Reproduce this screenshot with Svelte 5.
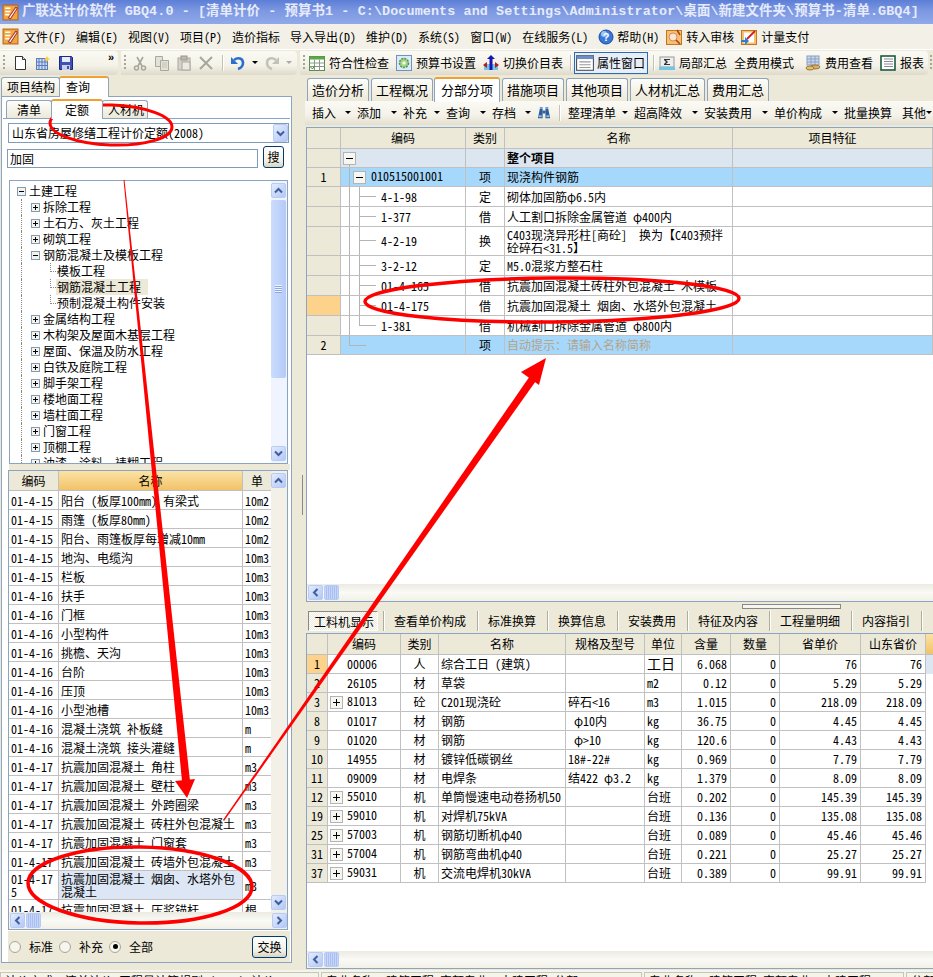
<script>
  const icons = {
    logo: '<rect x="1" y="1" width="14" height="14" fill="#f2a63c" stroke="#b5651d"/><path d="M3 4h5M3 7h5M3 10h4" stroke="#fff" stroke-width="1.5"/><path d="M6 13L13 3l1.5 1L8 14z" fill="#fff" stroke="#a33"/>',
    doc: '<path d="M3.5 1.5h7l3 3v10h-10z" fill="#fff" stroke="#333"/><path d="M10.5 1.5v3h3" fill="#dde" stroke="#333"/>',
    open: '<rect x="1.5" y="3.5" width="11" height="11" fill="#cfdcf6" stroke="#5b7bb8"/><path d="M4 3.5v11M7 3.5v11M10 3.5v11M1.5 7h11M1.5 10.5h11" stroke="#5b7bb8"/><path d="M12 1l1 2 2 1-2 1-1 2-1-2-2-1 2-1z" fill="#fc3"/>',
    save: '<path d="M1.5 1.5h12l1 1v12h-13z" fill="#3f51b5" stroke="#1c2a80"/><rect x="4" y="2" width="8" height="5" fill="#e8ecf8"/><rect x="4" y="10" width="8" height="5" fill="#c9cfe6"/><rect x="9" y="11" width="2" height="3" fill="#3f51b5"/>',
    cut: '<path d="M5 2l5 9M11 2L6 11" stroke="#a8a69c" stroke-width="1.6" fill="none"/><circle cx="4.5" cy="13" r="2" fill="none" stroke="#a8a69c" stroke-width="1.5"/><circle cx="11.5" cy="13" r="2" fill="none" stroke="#a8a69c" stroke-width="1.5"/>',
    copy: '<path d="M1.5 1.5h7v10h-7z" fill="#e4e2d8" stroke="#aaa89e"/><path d="M6.5 5.5h8v10h-8z" fill="#e4e2d8" stroke="#aaa89e"/><path d="M8 8h5M8 10h5M8 12h5" stroke="#c4c2b8"/>',
    paste: '<rect x="2" y="3" width="12" height="12" fill="#d6d4ca" stroke="#aaa89e"/><rect x="5" y="1" width="6" height="4" fill="#bdbbb0" stroke="#9a988e"/><rect x="6" y="7" width="8" height="8" fill="#eceae0" stroke="#aaa89e"/>',
    del: '<path d="M2 2l12 12M14 2L2 14" stroke="#a8a69c" stroke-width="2"/>',
    undo: '<path d="M4 5c4-3 9-2 9 3 0 3-2 5-5 6" fill="none" stroke="#2a6fd0" stroke-width="2.6"/><path d="M1 2v7h7z" fill="#2a6fd0"/>',
    redo: '<path d="M12 5C8 2 3 3 3 8c0 3 2 5 5 6" fill="none" stroke="#c4c2b8" stroke-width="2.6"/><path d="M15 2v7H8z" fill="#c4c2b8"/>',
    grid: '<rect x=".5" y="1.5" width="15" height="14" fill="#fff" stroke="#5a8a4a"/><rect x=".5" y="1.5" width="15" height="3" fill="#5aa84a"/><path d="M5.5 4.5v11M10.5 4.5v11M.5 8h15M.5 11.5h15" stroke="#8a9a8a"/><path d="M1.5 12l2 2 2-3" stroke="#2a9a2a" fill="none"/>',
    gear: '<rect x=".5" y=".5" width="15" height="15" fill="#dfeaf8" stroke="#6a94c4"/><circle cx="8" cy="8" r="4.5" fill="#a8d48a" stroke="#4a9a4a" stroke-dasharray="2 1" stroke-width="1.6"/><circle cx="8" cy="8" r="1.6" fill="#fff"/>',
    swap: '<rect x="1" y="9" width="14" height="6" fill="#6fc6e8"/><path d="M8 0l4 4H9.500v11h-3V4H4z" fill="#1616b8"/><path d="M0 10l4-3v6zM16 10l-4-3v6z" fill="#c01818"/>',
    win: '<rect x=".5" y="1.500" width="15" height="13" fill="#fff" stroke="#555"/><rect x=".5" y="1.500" width="15" height="3" fill="#6b8ec8"/><path d="M3 7h10M3 9.500h10M3 12h10" stroke="#999"/>',
    sum: '<rect x="1" y="2" width="14" height="10" fill="#eee" stroke="#999"/><path d="M5 4h6v1H7l2 2-2 2h4v1H5V9l2-2-2-2z" fill="#333"/><rect x="0" y="12" width="16" height="3" fill="#6fc6e8"/>',
    coin: '<rect x="2" y="1" width="12" height="9" fill="#c8d8f0" stroke="#8aa0c0"/><path d="M2 4h12M2 7h12M6 1v9M10 1v9" stroke="#8aa0c0"/><ellipse cx="10" cy="12" rx="5" ry="2" fill="#d8b060" stroke="#a07830"/><ellipse cx="5" cy="13" rx="4" ry="2" fill="#e0c070" stroke="#a07830"/>',
    book: '<rect x="1" y="1" width="14" height="14" fill="#fff" stroke="#1b5a3a" stroke-width="1.6"/><path d="M4 4h9M4 6.500h9M4 9h9M4 11.500h9" stroke="#889"/>',
    help: '<circle cx="8" cy="8" r="7" fill="#3a78d8" stroke="#1a4aa0"/><circle cx="6" cy="5" r="3" fill="#9cc4f4"/><text x="8" y="12" font-size="11" font-weight="700" text-anchor="middle" fill="#fff" font-family="Liberation Sans">?</text>',
    audit: '<rect x=".5" y="1.500" width="15" height="14" fill="#f6c070" stroke="#c07820"/><circle cx="7" cy="8" r="4" fill="#fbe6cf" stroke="#d88a60"/><path d="M10 11l4 4M11 1l3 5" stroke="#b04020" stroke-width="1.6"/>',
    pay: '<rect x=".5" y="1.500" width="15" height="14" fill="#f6c070" stroke="#c07820"/><rect x="3" y="3.500" width="10" height="10" fill="#fff"/><path d="M6 10L14 2" stroke="#d02020" stroke-width="1.8"/><path d="M0 11h4V8l4 4-4 4v-3H0z" fill="#2a7fd8"/>',
    binoc: '<path d="M1 14l2-10h3v10zM9 14V4h3l2 10z" fill="#2c5d9c"/><rect x="6" y="6" width="3" height="3" fill="#2c5d9c"/><path d="M3 2h3v2H3zM9 2h3v2H9z" fill="#6f95c4"/><rect x="2" y="11" width="3" height="2" fill="#9fc0e4"/><rect x="10" y="11" width="3" height="2" fill="#9fc0e4"/>'
  };

  const menus = ['文件(F)', '编辑(E)', '视图(V)', '项目(P)', '造价指标', '导入导出(D)', '维护(D)', '系统(S)', '窗口(W)', '在线服务(L)'];
  const rightTabs = ['造价分析', '工程概况', '分部分项', '措施项目', '其他项目', '人材机汇总', '费用汇总'];
  const subTools = [
    { t: '插入', w: 45 }, { t: '添加', w: 46 }, { t: '补充', w: 43 }, { t: '查询', w: 46 }, { t: '存档', w: 45 }
  ];
  const subTools2 = [
    { t: '整理清单', w: 66 }, { t: '超高降效', w: 70 }, { t: '安装费用', w: 70 }, { t: '单价构成', w: 70 }
  ];

  const tree = [
    { t: '土建工程', l: 0, box: 'minus' },
    { t: '拆除工程', l: 1, box: 'plus' },
    { t: '土石方、灰土工程', l: 1, box: 'plus' },
    { t: '砌筑工程', l: 1, box: 'plus' },
    { t: '钢筋混凝土及模板工程', l: 1, box: 'minus' },
    { t: '模板工程', l: 2 },
    { t: '钢筋混凝土工程', l: 2, sel: true },
    { t: '预制混凝土构件安装', l: 2, end: true },
    { t: '金属结构工程', l: 1, box: 'plus' },
    { t: '木构架及屋面木基层工程', l: 1, box: 'plus' },
    { t: '屋面、保温及防水工程', l: 1, box: 'plus' },
    { t: '白铁及庭院工程', l: 1, box: 'plus' },
    { t: '脚手架工程', l: 1, box: 'plus' },
    { t: '楼地面工程', l: 1, box: 'plus' },
    { t: '墙柱面工程', l: 1, box: 'plus' },
    { t: '门窗工程', l: 1, box: 'plus' },
    { t: '顶棚工程', l: 1, box: 'plus' },
    { t: '油漆、涂料、裱糊工程', l: 1, box: 'plus' }
  ];

  const quota = [
    ['01-4-15', '阳台 (板厚100mm) 有梁式', '10m2'],
    ['01-4-15', '雨篷 (板厚80mm)', '10m2'],
    ['01-4-15', '阳台、雨篷板厚每增减10mm', '10m2'],
    ['01-4-15', '地沟、电缆沟', '10m3'],
    ['01-4-15', '栏板', '10m3'],
    ['01-4-16', '扶手', '10m3'],
    ['01-4-16', '门框', '10m3'],
    ['01-4-16', '小型构件', '10m3'],
    ['01-4-16', '挑檐、天沟', '10m3'],
    ['01-4-16', '台阶', '10m3'],
    ['01-4-16', '压顶', '10m3'],
    ['01-4-16', '小型池槽', '10m3'],
    ['01-4-16', '混凝土浇筑 补板缝', 'm'],
    ['01-4-16', '混凝土浇筑 接头灌缝', 'm'],
    ['01-4-17', '抗震加固混凝土 角柱', 'm3'],
    ['01-4-17', '抗震加固混凝土 壁柱', 'm3'],
    ['01-4-17', '抗震加固混凝土 外跨圈梁', 'm3'],
    ['01-4-17', '抗震加固混凝土 砖柱外包混凝土', 'm3'],
    ['01-4-17', '抗震加固混凝土 门窗套', 'm3'],
    ['01-4-17', '抗震加固混凝土 砖墙外包混凝土', 'm3'],
    ['01-4-175', '抗震加固混凝土 烟囱、水塔外包混凝土', 'm3', true],
    ['01-4-17', '抗震加固混凝土 压浆锚杆', '根']
  ];

  const items = [
    { no: '', kind: 'all', h: 19, code: '', type: '', name: '整个项目' },
    { no: '1', kind: 'item', h: 19, code: '010515001001', type: '项', name: '现浇构件钢筋' },
    { no: '', kind: 'sub', h: 20, code: '4-1-98', type: '定', name: '砌体加固筋φ6.5内' },
    { no: '', kind: 'sub', h: 20, code: '1-377', type: '借', name: '人工割口拆除金属管道 φ400内' },
    { no: '', kind: 'sub', h: 29, code: '4-2-19', type: '换', name: 'C403现浇异形柱[商砼]  换为【C403预拌砼碎石<31.5】' },
    { no: '', kind: 'sub', h: 20, code: '3-2-12', type: '定', name: 'M5.0混浆方整石柱' },
    { no: '', kind: 'sub', h: 20, code: '01-4-165', type: '借', name: '抗震加固混凝土砖柱外包混凝土 木模板' },
    { no: '', kind: 'sub', h: 20, code: '01-4-175', type: '借', name: '抗震加固混凝土 烟囱、水塔外包混凝土', cur: true },
    { no: '', kind: 'sub last', h: 20, code: '1-381', type: '借', name: '机械割口拆除金属管道 φ800内' },
    { no: '2', kind: 'item end', h: 19, code: '', type: '项', name: '自动提示：请输入名称简称', hint: true }
  ];

  const lowerTabs = ['查看单价构成', '标准换算', '换算信息', '安装费用', '特征及内容', '工程量明细', '内容指引'];

  const mats = [
    ['1', false, '00006', '人', '综合工日 (建筑)', '', '工日', '6.068', '76', '76'],
    ['2', false, '26105', '材', '草袋', '', 'm2', '0.12', '5.29', '5.29'],
    ['3', true, '81013', '砼', 'C201现浇砼', '碎石<16', 'm3', '1.015', '218.09', '218.09'],
    ['8', false, '01017', '材', '钢筋', ' φ10内', 'kg', '36.75', '4.45', '4.45'],
    ['9', false, '01020', '材', '钢筋', ' φ>10', 'kg', '120.6', '4.43', '4.43'],
    ['10', false, '14955', '材', '镀锌低碳钢丝', '18#-22#', 'kg', '0.969', '7.79', '7.79'],
    ['11', false, '09009', '材', '电焊条', '结422 φ3.2', 'kg', '1.379', '8.09', '8.09'],
    ['12', true, '55010', '机', '单筒慢速电动卷扬机50', '', '台班', '0.202', '145.39', '145.39'],
    ['19', true, '59010', '机', '对焊机75kVA', '', '台班', '0.136', '135.08', '135.08'],
    ['25', true, '57003', '机', '钢筋切断机φ40', '', '台班', '0.089', '45.46', '45.46'],
    ['31', true, '57004', '机', '钢筋弯曲机φ40', '', '台班', '0.221', '25.27', '25.27'],
    ['37', true, '59031', '机', '交流电焊机30kVA', '', '台班', '0.389', '99.91', '99.91']
  ];
</script>

{#snippet ico(name, size = 16)}
  <svg class="ico" width={size} height={size} viewBox="0 0 16 16">{@html icons[name]}</svg>
{/snippet}

{#snippet box(kind)}
  <svg class="box" width="9" height="9" viewBox="0 0 9 9">
    <rect x=".5" y=".5" width="8" height="8" fill="#f4f2ea" stroke="#7f9db9" />
    <path d={kind === 'plus' ? 'M2 4.500h5M4.500 2v5' : 'M2 4.500h5'} stroke="#000" />
  </svg>
{/snippet}

{#snippet bigbox(kind)}
  <svg class="bigbox" width="13" height="13" viewBox="0 0 13 13">
    <rect x=".5" y=".5" width="12" height="12" fill="#f6f6f2" stroke="#b4b4b0" />
    <path d={kind === 'plus' ? 'M3 6.500h7M6.500 3v7' : 'M3 6.500h7'} stroke="#000" />
  </svg>
{/snippet}

{#snippet sbtn(dir)}
  <div class="sb-btn">
    <svg width="9" height="9" viewBox="0 0 9 9">
      {#if dir === 'up'}
        <path d="M1 6.500L4.500 3 8 6.500" fill="none" stroke="#3e5f9e" stroke-width="2" />
      {:else if dir === 'down'}
        <path d="M1 2.500L4.500 6 8 2.500" fill="none" stroke="#3e5f9e" stroke-width="2" />
      {:else if dir === 'left'}
        <path d="M6.500 1L3 4.500 6.500 8" fill="none" stroke="#3e5f9e" stroke-width="2" />
      {:else}
        <path d="M2.500 1L6 4.500 2.500 8" fill="none" stroke="#3e5f9e" stroke-width="2" />
      {/if}
    </svg>
  </div>
{/snippet}

{#snippet hscroll(arrowRight)}
  <div class="hscroll">
    {@render sbtn('left')}
    <div class="hthumb"></div>
    <div class="grow"></div>
    {#if arrowRight}{@render sbtn('right')}{/if}
  </div>
{/snippet}

<div class="app">
  <div class="title">{@render ico('logo', 17)}<span>广联达计价软件 GBQ4.0 - [清单计价 - 预算书1 - C:\Documents and Settings\Administrator\桌面\新建文件夹\预算书-清单.GBQ4]</span></div>

  <div class="menu">
    {@render ico('logo', 17)}
    {#each menus as m}<span class="menu-item">{m}</span>{/each}
    <span class="menu-item icon">{@render ico('help', 16)}帮助(H)</span>
    <span class="menu-item icon tight">{@render ico('audit', 16)}转入审核</span>
    <span class="menu-item icon tight">{@render ico('pay', 16)}计量支付</span>
  </div>

  <div class="toolbar">
    <div class="seg seg1">
      <i class="grip"></i>
      {@render ico('doc')}{@render ico('open')}{@render ico('save')}
      <span class="more">»</span>
    </div>
    <div class="seg seg2">
      <i class="grip"></i>
      {@render ico('cut')}{@render ico('copy')}{@render ico('paste')}{@render ico('del')}
      <i class="sep"></i>
      {@render ico('undo')}<i class="caret"></i>{@render ico('redo')}<i class="caret off"></i>
    </div>
    <div class="seg seg3">
      <i class="grip"></i>
      <span class="tb">{@render ico('grid')}符合性检查</span>
      <span class="tb">{@render ico('gear')}预算书设置</span>
      <span class="tb">{@render ico('swap')}切换价目表</span>
      <i class="sep"></i>
      <span class="tb active">{@render ico('win', 18)}属性窗口</span>
      <i class="sep"></i>
      <span class="tb">{@render ico('sum')}局部汇总</span>
      <span class="tb spaced">全费用模式</span>
      <span class="tb">{@render ico('coin')}费用查看</span>
      <span class="tb">{@render ico('book')}报表</span>
    </div>
    <i class="grip last"></i>
  </div>

  <div class="main">
    <div class="left">
      <div class="tabs lefttabs">
        <span class="tab">项目结构</span>
        <span class="tab on">查询</span>
      </div>
      <div class="panel">
        <div class="tabs subtabs">
          <span class="tab">清单</span>
          <span class="tab on">定额</span>
          <span class="tab">人材机</span>
        </div>
        <div class="query">
          <div class="select">
            <span class="grow">山东省房屋修缮工程计价定额(2008)</span>
            {@render sbtn('down')}
          </div>
          <div class="search">
            <div class="input">加固</div>
            <button class="btn">搜</button>
          </div>
          <div class="tree">
            <div class="tree-body">
              {#each tree as n}
                <div class="node l{n.l}" class:end={n.end}>
                  {#if n.box}{@render box(n.box)}{/if}
                  <span class="label" class:sel={n.sel}>{n.t}</span>
                </div>
              {/each}
            </div>
            <div class="vscroll">
              {@render sbtn('up')}
              <div class="vthumb tall"><b class="lines"></b></div>
              <div class="grow"></div>
              {@render sbtn('down')}
            </div>
          </div>
          <div class="divider"></div>
          <div class="list">
            <div class="list-top">
              <div class="list-rows">
                <table class="grid qt">
                  <thead>
                    <tr><th class="c1">编码</th><th class="c2 hot">名称</th><th class="c3">单</th></tr>
                  </thead>
                  <tbody>
                    {#each quota as q}
                      <tr class:picked={q[3]}>
                        <td class="c1">{q[0]}</td>
                        <td class="c2 nm">{q[1]}</td>
                        <td class="c3">{q[2]}</td>
                      </tr>
                    {/each}
                  </tbody>
                </table>
              </div>
              <div class="vscroll plain">
                {@render sbtn('up')}
                <div class="grow"></div>
                {@render sbtn('down')}
              </div>
            </div>
            {@render hscroll(true)}
          </div>
          <div class="filter">
            <i class="radio"></i><span>标准</span>
            <i class="radio"></i><span>补充</span>
            <i class="radio checked"></i><span>全部</span>
            <button class="btn wide">交换</button>
          </div>
        </div>
      </div>
    </div>

    <div class="splitter"><i></i></div>

    <div class="right">
      <div class="tabs righttabs">
        {#each rightTabs as t, i}<span class="tab" class:on={i === 2}>{t}</span>{/each}
      </div>
      <div class="subbar">
        {#each subTools as s}
          <span class="st" style="width:{s.w}px">{s.t}<i class="caret"></i></span>
        {/each}
        {@render ico('binoc', 15)}
        <i class="sep"></i>
        {#each subTools2 as s}
          <span class="st" style="width:{s.w}px">{s.t}<i class="caret"></i></span>
        {/each}
        <span class="st batch">批量换算</span>
        <span class="st other">其他<i class="caret"></i></span>
      </div>

      <div class="frame upper">
        <table class="grid it">
          <thead>
            <tr>
              <th class="i0"></th><th class="i1">编码</th><th class="i2">类别</th><th class="i3">名称</th><th class="i4">项目特征</th>
            </tr>
          </thead>
          <tbody>
            {#each items as r}
              <tr class={r.kind} class:cur={r.cur} style="height:{r.h}px">
                <td class="num">{r.no}</td>
                <td class="code">
                  {#if r.kind === 'all'}{@render bigbox('minus')}{/if}
                  {#if r.kind === 'item' && r.code}{@render bigbox('minus')}{/if}
                  {r.code}
                </td>
                <td class="mid">{r.type}</td>
                <td class="nm" class:hint={r.hint} class:bold={r.kind === 'all'}>{r.name}</td>
                <td></td>
              </tr>
            {/each}
          </tbody>
        </table>
        <div class="grow"></div>
        {@render hscroll(false)}
      </div>

      <div class="grab"><i></i></div>

      <div class="lowerbar">
        <span class="lt pressed">工料机显示</span>
        {#each lowerTabs as t}<i class="bar"></i><span class="lt">{t}</span>{/each}
        <i class="bar"></i>
      </div>

      <div class="frame lower">
        <table class="grid mt">
          <thead>
            <tr>
              <th class="m0"></th><th class="m1">编码</th><th class="m2">类别</th><th class="m3">名称</th>
              <th class="m4">规格及型号</th><th class="m5">单位</th><th class="m6">含量</th><th class="m7">数量</th>
              <th class="m8">省单价</th><th class="m9">山东省价</th><th class="m10 hot"></th>
            </tr>
          </thead>
          <tbody>
            {#each mats as r, i}
              <tr>
                <td class="num" class:now={i === 0}>{r[0]}</td>
                <td class="code">{#if r[1]}{@render bigbox('plus')}{/if}<span class="mcode">{r[2]}</span></td>
                <td class="mid">{r[3]}</td>
                <td class="nm">{r[4]}</td>
                <td class="nm">{r[5]}</td>
                <td class="nm" class:big={i === 0}>{r[6]}</td>
                <td class="rt">{r[7]}</td>
                <td class="rt">0</td>
                <td class="rt">{r[8]}</td>
                <td class="rt">{r[9]}</td>
                <td class:tint={i === 0} class="edge"></td>
              </tr>
            {/each}
          </tbody>
        </table>
        <div class="grow"></div>
        {@render hscroll(false)}
      </div>
    </div>
  </div>

  <div class="status">
    <span class="s1">计价方式：清单计价 工程量计算规则 (2008)-计价</span>
    <span class="s2">专业名称：建筑工程 定额专业：土建工程 分部</span>
    <span class="s3">专业名称：建筑工程 定额专业：土建工程</span>
    <span class="s4">分部</span>
  </div>

  <svg class="marks" width="933" height="977" viewBox="0 0 933 977">
    <ellipse cx="111" cy="125" rx="61" ry="20" transform="rotate(2 111 125)" fill="none" stroke="#f00" stroke-width="3" />
    <ellipse cx="552" cy="300" rx="187" ry="22" transform="rotate(-.5 552 300)" fill="none" stroke="#f00" stroke-width="3.500" />
    <ellipse cx="140" cy="885" rx="112" ry="38" transform="rotate(1 140 885)" fill="none" stroke="#f00" stroke-width="3.500" />
    <path d="M123.500 180h1L190 781h-8z" fill="#f00" />
    <path d="M175 781l20-2-8 19z" fill="#f00" />
    <path d="M223 820l1 1L538 378l-6-5z" fill="#f00" />
    <path d="M546 358l-25 14 18 13z" fill="#f00" />
  </svg>
</div>

<style>
  :global(body) { margin: 0; background: #ece9d8; }

  .app {
    position: relative;
    width: 933px;
    height: 977px;
    overflow: hidden;
    display: flex;
    flex-direction: column;
    background: #ece9d8;
    font: 12px/16px "Noto Sans CJK SC", "Liberation Sans", sans-serif;
    font-feature-settings: "hwid";
    color: #000;
  }

  .ico { flex: none; display: block; }
  .grow { flex: 1; }
  i { display: block; font-style: normal; }

  .title {
    height: 24px;
    flex: none;
    display: flex;
    align-items: center;
    gap: 3px;
    padding-left: 2px;
    background: linear-gradient(#5c7ed6, #7c98e2 45%, #90a9e9);
    color: #e6ebfb;
    font: bold 13.4px/24px "Liberation Mono", "Noto Sans CJK SC", monospace;
    font-feature-settings: normal;
    letter-spacing: .11px;
    white-space: pre;
  }

  .menu {
    height: 26px;
    flex: none;
    display: flex;
    align-items: center;
    padding-left: 2px;
    background: #f3f1e7;
    border-bottom: 1px solid #fff;
    box-sizing: border-box;
  }
  .menu-item { margin-left: 10px; white-space: pre; }
  .menu-item.icon { display: flex; align-items: center; gap: 3px; }
  .menu-item.tight { margin-left: 7px; gap: 4px; }
  .menu-item:first-of-type { margin-left: 5px; }

  .toolbar {
    height: 25px;
    flex: none;
    display: flex;
    align-items: center;
    gap: 3px;
    background: #ece9d8;
  }
  .seg {
    height: 24px;
    box-sizing: border-box;
    display: flex;
    align-items: center;
    background: linear-gradient(#faf9f4, #f4f2e8 60%, #dedacb);
    border-radius: 0 4px 4px 0;
  }
  .grip {
    width: 2px;
    height: 16px;
    margin: 0 4px 0 3px;
    background: repeating-linear-gradient(#a8a596 0 2px, transparent 2px 4px);
    flex: none;
  }
  .grip.last { margin: 0 0 0 -1px; }
  .seg1 { width: 118px; gap: 7px; position: relative; }
  .seg1 .grip { margin-right: 0; }
  .more { position: absolute; right: 4px; top: 0; font: bold 11px/12px "Liberation Sans", sans-serif; }
  .seg2 { width: 176px; gap: 6px; }
  .seg2 .grip { margin-right: 0; }
  .seg2 .sep { margin-left: 2px; }
  .sep { width: 1px; height: 16px; background: #c5c2b2; border-right: 1px solid #fff; flex: none; }
  .caret { width: 0; height: 0; border: 3px solid transparent; border-top: 3px solid #000; border-bottom: 0; flex: none; }
  .caret.off { border-top-color: #aaa; }
  .seg3 { width: 628px; }
  .tb { display: flex; align-items: center; gap: 4px; margin-right: 7px; white-space: nowrap; }
  .tb.spaced { margin-right: 11px; }
  .tb.active {
    height: 22px;
    padding: 0 2px 0 1px;
    margin: 0 5px 0 1px;
    background: #e8eef7;
    border: 1px solid #2a6bb8;
    box-sizing: border-box;
    gap: 3px;
  }
  .seg3 .sep { margin-right: 1px; }
  .tb.active + .sep { margin-right: 4px; }

  .main { flex: 1; min-height: 0; display: flex; }

  .tabs { display: flex; align-items: flex-end; }
  .tab {
    box-sizing: border-box;
    height: 19px;
    padding: 0 5px;
    border: 1px solid #91a3b8;
    border-bottom: 0;
    border-radius: 3px 3px 0 0;
    background: linear-gradient(#fdfdfa, #ece9d8);
    line-height: 17px;
    white-space: nowrap;
    position: relative;
  }
  .tab.on {
    height: 21px;
    background: #fff;
    border-color: #91a3b8;
    border-top: 2px solid #f0a030;
    z-index: 1;
    margin-bottom: -1px;
  }

  .left { width: 296px; flex: none; display: flex; flex-direction: column; padding: 1px 0 7px 1px; box-sizing: border-box; }
  .lefttabs { height: 20px; margin-right: 0; }
  .lefttabs .tab { width: 59px; text-align: center; }
  .lefttabs .tab.on { width: 50px; text-align: left; padding-left: 6px; margin-left: -1px; }

  .panel {
    width: 291px;
    height: 867px;
    box-sizing: border-box;
    background: #fff;
    border: 1px solid #8ba4c1;
    display: flex;
    flex-direction: column;
  }
  .subtabs { height: 21px; padding-left: 4px; }
  .subtabs .tab { width: 46px; text-align: center; height: 18px; }
  .subtabs .tab.on { width: 52px; height: 20px; margin-left: -1px; }
  .subtabs .tab:last-child { margin-left: -1px; }

  .query {
    flex: 1;
    margin: 0 1px 0 1px;
    border-top: 1px solid #8ba4c1;
    display: flex;
    flex-direction: column;
    min-height: 0;
  }
  .select {
    height: 20px;
    margin: 4px 1px 0 5px;
    border: 1px solid #7f9db9;
    display: flex;
    align-items: center;
    padding-left: 3px;
    box-sizing: border-box;
  }
  .select :global(.sb-btn) { width: 15px; height: 18px; }
  .search { display: flex; gap: 5px; margin: 3px 0 0 4px; height: 22px; align-items: flex-end; }
  .input {
    width: 251px;
    height: 19px;
    border: 1px solid #7f9db9;
    box-sizing: border-box;
    line-height: 17px;
    padding-left: 2px;
  }
  .btn {
    font: inherit;
    font-feature-settings: inherit;
    width: 21px;
    height: 22px;
    padding: 0;
    background: linear-gradient(#fff, #f2f0e4 70%, #d8d3c0);
    border: 1px solid #003c74;
    border-radius: 3px;
    color: #000;
  }
  .btn.wide { width: 35px; margin-left: auto; margin-right: 3px; }

  .tree {
    height: 284px;
    margin: 12px 2px 0 6px;
    flex: none;
    border: 1px solid #8ba4c1;
    box-sizing: border-box;
    display: flex;
  }
  .tree-body { flex: 1; padding-top: 2px; overflow: hidden; position: relative; }
  .node { height: 16px; position: relative; display: flex; align-items: center; white-space: nowrap; }
  .l0 { padding-left: 7px; }
  .l1 { padding-left: 21px; }
  .l2 { padding-left: 47px; }
  .box { margin-right: 3px; flex: none; background: #fff; position: relative; z-index: 1; }
  .l1::before, .l2::before {
    content: "";
    position: absolute;
    left: 11px;
    top: 0;
    bottom: 0;
    border-left: 1px dotted #888;
  }
  .l2::after {
    content: "";
    position: absolute;
    left: 40px;
    top: 0;
    width: 7px;
    height: 8px;
    border-left: 1px dotted #888;
    border-bottom: 1px dotted #888;
  }
  .l2 .label { padding: 0 1px; margin-left: -1px; }
  .label.sel { background: #ece9d8; height: 16px; padding-right: 7px; }
  .vscroll {
    width: 16px;
    flex: none;
    display: flex;
    flex-direction: column;
    background: #f0f4fe;
    padding: 2px 0;
    box-sizing: border-box;
  }
  .vscroll.plain { background: #f3f1e7; }
  :global(.sb-btn) {
    flex: none;
    width: 15px;
    height: 15px;
    background: linear-gradient(135deg, #e3ebfd, #b4c8f6);
    border: 1px solid #b8cbf4;
    border-radius: 2px;
    box-sizing: border-box;
    display: flex;
    align-items: center;
    justify-content: center;
  }
  .vthumb {
    height: 178px;
    margin-top: 2px;
    width: 15px;
    background: linear-gradient(90deg, #cbdcfc, #b5caf7);
    border-radius: 2px;
    display: flex;
    align-items: center;
    justify-content: center;
  }
  .lines { width: 7px; height: 8px; background: repeating-linear-gradient(#eef3fe 0 1px, #8fa9e0 1px 2px); }

  .divider { height: 6px; flex: none; background: #ece9d8; margin: 0 0 0 6px; }

  .list {
    height: 460px;
    flex: none;
    margin: 0 2px 0 5px;
    border: 1px solid #8ba4c1;
    box-sizing: border-box;
    display: flex;
    flex-direction: column;
  }
  .list-top { flex: 1; min-height: 0; display: flex; }
  .list-rows { flex: 1; overflow: hidden; }
  .grid { border-collapse: separate; border-spacing: 0; table-layout: fixed; background: #fff; }
  .grid th {
    font-weight: 400;
    background: #ece9d8;
    border-right: 1px solid #c0c0c0;
    border-bottom: 1px solid #c0c0c0;
    padding: 0;
    box-sizing: border-box;
    overflow: hidden;
  }
  .grid td {
    border-right: 1px solid #c0c0c0;
    border-bottom: 1px solid #c0c0c0;
    padding: 0 2px;
    box-sizing: border-box;
    overflow: hidden;
    line-height: 13px;
  }
  .grid th.hot { background: linear-gradient(#fbe3a5, #f2c268); }
  .qt { width: 262px; }
  .qt th { height: 20px; }
  .qt td { height: 19px; word-break: break-all; }
  .qt .c1 { width: 50px; }
  .qt .c2 { width: 184px; }
  .qt .c3 { width: 28px; border-right: 0; }
  .nm { white-space: pre-wrap; }
  .qt tr.picked .nm { background: #dce6f5; }
  .qt tr.picked td { height: 29px; }

  .hscroll {
    height: 17px;
    flex: none;
    display: flex;
    align-items: center;
    background: linear-gradient(#ecebe2, #fafaf6 50%, #f2f0e6);
    padding: 0 0 0 1px;
  }
  .hthumb { width: 15px; height: 15px; margin-left: 1px; border-radius: 2px; background: repeating-linear-gradient(90deg, #c6d6fa 0 1px, #a9bff0 1px 2px); border: 1px solid #b8cbf4; box-sizing: border-box; flex: none; }

  .filter {
    flex: 1;
    background: #ece9d8;
    margin: 1px 0 0 5px;
    display: flex;
    align-items: center;
    padding-left: 1px;
  }
  .filter span { margin: 0 6px 0 8px; }
  .radio {
    width: 10px;
    height: 10px;
    border: 1px solid #a8a698;
    border-radius: 50%;
    background: #f6f5ee;
    flex: none;
    position: relative;
  }
  .radio.checked::after {
    content: "";
    position: absolute;
    inset: 2.500px;
    border-radius: 50%;
    background: #000;
  }

  .splitter { width: 9px; flex: none; position: relative; }
  .splitter i { position: absolute; left: 6px; top: 400px; width: 1px; height: 40px; background: #8a8a80; }

  .right { flex: 1; min-width: 0; display: flex; flex-direction: column; padding-bottom: 1px; box-sizing: border-box; }
  .righttabs { height: 26px; margin-left: 2px; gap: 2px; }
  .righttabs .tab { font-size: 13px; padding: 0 4px; height: 23px; line-height: 21px; }
  .righttabs .tab.on { height: 25px; margin: 0 0 -1px -1px; padding: 0 6px; }

  .subbar {
    height: 24px;
    flex: none;
    display: flex;
    align-items: center;
    padding-left: 7px;
    background: linear-gradient(#faf9f4, #f4f2e8 60%, #e2decf);
    overflow: hidden;
  }
  .st { display: flex; align-items: center; flex: none; white-space: nowrap; }
  .st .caret { margin-left: auto; margin-right: 6px; }
  .subbar .sep { margin: 0 7px; }
  .st.batch { width: 58px; }
  .st.other { width: 32px; }

  .frame {
    border: 1px solid #8ba4c1;
    border-right: 0;
    margin-left: 1px;
    display: flex;
    flex-direction: column;
    box-sizing: border-box;
    overflow: hidden;
  }
  .upper { height: 476px; margin-top: 2px; background: #fff; }
  .it { width: 626px; flex: none; }
  .it th { height: 21px; }
  .it .i0 { width: 34px; }
  .it .i1 { width: 125px; }
  .it .i2 { width: 39px; }
  .it .i3 { width: 228px; }
  .it .i4 { width: 200px; }
  .it td.num { background: #ece9d8; text-align: center; }
  .it tr.cur td.num { background: #fdd38b; }
  .it td.code { padding-left: 1px; white-space: nowrap; }
  .it td.mid, .mt td.mid { text-align: center; }
  .it tr.all td { background: #dce6f1; }
  .it tr.all td.num { background: #ece9d8; }
  .it tr.item td { background: #a6d8fb; }
  .it tr.item td.num { background: #ece9d8; }
  .bold { font-weight: 700; }
  .hint { color: #b5a48c; }
  :global(.bigbox) { vertical-align: -3px; margin-right: -1px; }
  .it tr.all td.code { padding-left: 2px; background: linear-gradient(#b4b4b4, #b4b4b4) 8px 16px / 1px 5px no-repeat, #dce6f1; }
  .it tr.item td.code {
    padding-left: 12px;
    background: linear-gradient(#b4b4b4, #b4b4b4) 8px 0 / 1px 100% no-repeat, #a6d8fb;
  }
  .it tr.item.end td.code {
    background:
      linear-gradient(#b4b4b4, #b4b4b4) 8px 0 / 1px 50% no-repeat,
      linear-gradient(#b4b4b4, #b4b4b4) 8px 9px / 17px 1px no-repeat,
      #a6d8fb;
  }
  .it tr.sub td.code {
    padding-left: 40px;
    background:
      linear-gradient(#b4b4b4, #b4b4b4) 8px 0 / 1px 100% no-repeat,
      linear-gradient(#b4b4b4, #b4b4b4) 18px 0 / 1px 100% no-repeat,
      linear-gradient(#b4b4b4, #b4b4b4) 18px 50% / 17px 1px no-repeat,
      #fff;
  }
  .it tr.sub.last td.code {
    background:
      linear-gradient(#b4b4b4, #b4b4b4) 8px 0 / 1px 100% no-repeat,
      linear-gradient(#b4b4b4, #b4b4b4) 18px 0 / 1px 50% no-repeat,
      linear-gradient(#b4b4b4, #b4b4b4) 18px 50% / 17px 1px no-repeat,
      #fff;
  }

  .grab { height: 8px; flex: none; position: relative; background: #ece9d8; }
  .grab i { position: absolute; left: 437px; top: 2px; width: 99px; height: 5px; border: 1px solid #888; background: #f6f5ee; box-sizing: border-box; }

  .lowerbar { height: 22px; flex: none; display: flex; align-items: center; padding-left: 3px; background: #ece9d8; white-space: nowrap; }
  .lt { margin: 0 11px 0 9px; flex: none; }
  .lt.pressed {
    margin: 0 5px 0 0;
    padding: 0 3px 0 5px;
    height: 20px;
    line-height: 19px;
    border: 1px solid;
    border-color: #888 #fff #fff #888;
    box-sizing: border-box;
    background: repeating-conic-gradient(#fff 0 25%, #ece9d8 0 50%) 0 0 / 2px 2px;
  }
  .bar { width: 1px; height: 20px; background: #b0ad9e; border-right: 1px solid #fff; flex: none; }

  .lower { height: 337px; margin-top: 1px; background: #fff; }
  .mt { width: 626px; flex: none; }
  .mt th { height: 21px; }
  .mt td { height: 19px; }
  .mt .m0 { width: 21px; }
  .mt .m1 { width: 73px; }
  .mt .m2 { width: 38px; }
  .mt .m3 { width: 127px; }
  .mt .m4 { width: 79px; }
  .mt .m5 { width: 37px; }
  .mt .m6 { width: 49px; }
  .mt .m7 { width: 49px; }
  .mt .m8 { width: 81px; }
  .mt .m9 { width: 65px; }
  .mt .m10 { width: 7px; border-right: 0 !important; }
  .mt td.num { background: #ece9d8; text-align: center; padding: 0; }
  .mt td.num.now { background: #fdd38b; }
  .mt td.code { padding-left: 2px; white-space: nowrap; }
  .mt td.code .mcode:first-child { padding-left: 17px; }
  .mt td.code :global(.bigbox) { margin-right: 4px; }
  .mt td.rt { text-align: right; padding-right: 3px; }
  .mt td.nm { padding: 0 2px; white-space: pre; }
  .mt td.big { font-size: 14px; }
  .mt td.edge { border-right: 0; border-bottom: 0; padding: 0; }
  .mt td.tint { background: #dce6f1; }

  .status {
    height: 7px;
    flex: none;
    overflow: hidden;
    display: flex;
    gap: 2px;
    padding-top: 2px;
    box-sizing: border-box;
    background: #f5f4ea;
    line-height: 13px;
    font-size: 12px;
  }
  .status span { display: block; flex: none; border: 1px solid #c8c5b4; border-bottom: 0; box-sizing: border-box; padding: 1px 0 0 4px; white-space: nowrap; overflow: hidden; height: 16px; }
  .s1 { width: 319px; }
  .s2 { width: 321px; }
  .s3 { width: 260px; }
  .s4 { width: 29px; }

  .marks { position: absolute; left: 0; top: 0; pointer-events: none; }
</style>
